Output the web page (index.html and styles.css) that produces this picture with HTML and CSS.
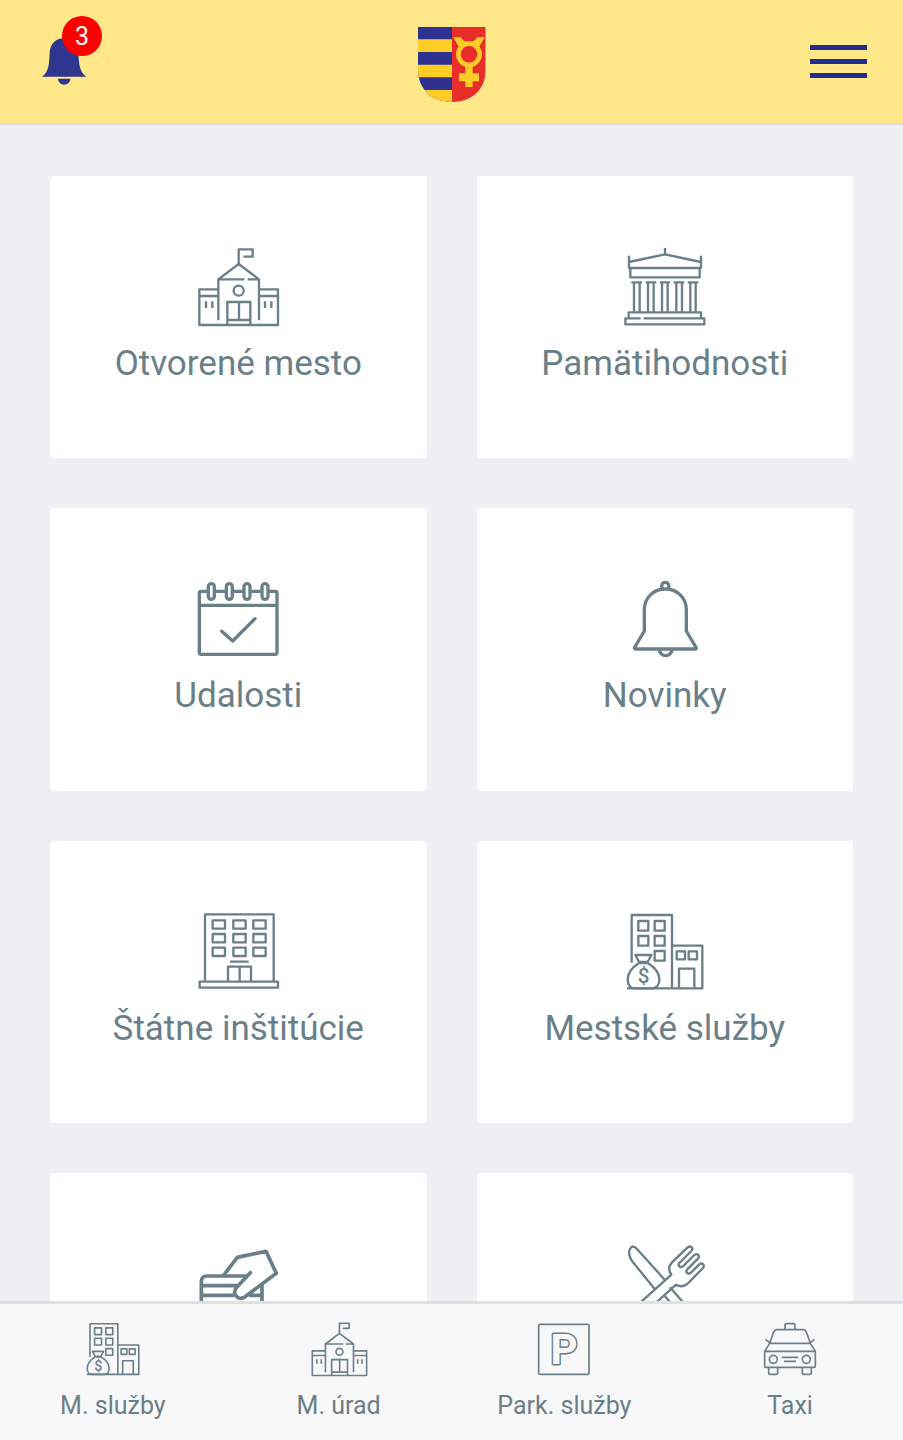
FILE: index.html
```html
<!DOCTYPE html>
<html lang="sk">
<head>
  <meta charset="UTF-8">
  <meta name="viewport" content="width=device-width, initial-scale=1">
  <title>Mesto</title>
  <link rel="stylesheet" href="styles.css">
</head>
<body>

  <!-- icons used both in the grid and in the bottom bar -->
  <svg class="sprite" aria-hidden="true">
    <symbol id="town-hall" viewBox="49 31 252 252">
      <path d="M177 85V41h42v22h-28M116 254V131l61-46 61 46v123M116 131h78M204 131h34M116 161H59v107h236V161h-57M59 181h57M238 181h57M79 197v20M98 197v20M256 197v20M275 197v20M143 268v-69h69v69M178 199v54M143 253h69"/>
      <circle cx="177" cy="165" r="15"/>
    </symbol>
    <symbol id="services" viewBox="54 31 252 252">
      <path d="M80 186V43h121v220M201 135h91v128H66M100 61h30v29h-30zM149 61h30v29h-30zM100 106h30v29h-30zM149 106h30v29h-30zM149 151h30v29h-30zM215 152h25v24h-25zM251 152h25v24h-25zM222 263v-59h46v59"/>
      <path d="M91 163h48l-11 21h-26zM102 187c-22 14-34 31-34 50 0 16 9 26 20 26h54c13 0 21-11 21-27 0-20-15-37-35-49z"/>
      <text class="icon-dollar" x="116" y="247">$</text>
    </symbol>
  </svg>

  <div class="app">
    <header class="header">
      <button class="bell" type="button" aria-label="Upozornenia">
        <svg width="45" height="50" viewBox="66 112 135 150">
          <path d="M66 234c22-15 21-42 23-72 1-26 18-43 43-43s42 17 43 43c2 30 2 57 24 72zM114 240h37a18 18 0 0 1-37 0z"/>
        </svg>
        <span class="badge">3</span>
      </button>

      <svg class="crest" width="68" height="82" viewBox="52 17 204 246">
        <clipPath id="shield">
          <path d="M52 37h203v128c0 63-43 98-101 98S52 228 52 165z"/>
        </clipPath>
        <g clip-path="url(#shield)">
          <path fill="#2e3192" d="M52 37h102v228H52z"/>
          <path fill="#ffcb25" d="M52 75h102v38H52zM52 151h102v38H52zM52 227h102v38H52z"/>
          <path fill="#e72e2b" d="M154 37h102v228H154z"/>
        </g>
        <circle cx="205" cy="120" r="32" fill="none" stroke="#ffcb25" stroke-width="14"/>
        <path fill="#ffcb25" d="M158 69h23c4 10 13 14 24 14s20-4 24-14h23l-19 33-28-11-28 11zM194 155h22v22h19v24h-19v17h-22v-17h-19v-24h19z"/>
      </svg>

      <button class="menu" type="button" aria-label="Menu">
        <span></span>
        <span></span>
        <span></span>
      </button>
    </header>

    <main class="content">
      <div class="grid">
        <a class="card" href="#">
          <svg class="icon"><use href="#town-hall"/></svg>
          <span>Otvorené mesto</span>
        </a>
        <a class="card" href="#">
          <svg class="icon" viewBox="55 33 252 252">
            <path d="M181 39v20M73 62v37h216V62M73 81l108-23 108 23M77 99v28h208V99M80 142h32M123 142h32M166 142h30M207 142h32M249 142h32"/>
            <path d="M88 142v89M105 142v89M130 142v89M147 142v89M172 142v89M189 142v89M215 142v89M232 142v89M257 142v89M273 142v89M72 249v-17h217v17M108 250H62v18h237v-18H117"/>
          </svg>
          <span>Pamätihodnosti</span>
        </a>
        <a class="card" href="#">
          <svg class="icon icon-bold" viewBox="49 23 252 252">
            <path d="M82 63H64q-5 0-5 5v178q0 6 5 6h223q5 0 5-6V68q0-5-5-5h-18M107 63h29M161 63h29M215 63h29M59 105h233M126 183l33 29 67-67"/>
            <rect x="86" y="40" width="18" height="47" rx="9"/>
            <rect x="140" y="40" width="18" height="47" rx="9"/>
            <rect x="193" y="40" width="18" height="47" rx="9"/>
            <rect x="247" y="40" width="18" height="47" rx="9"/>
          </svg>
          <span>Udalosti</span>
        </a>
        <a class="card" href="#">
          <svg class="icon icon-bold" viewBox="54 23 252 252">
            <path d="M92 236h179c3 0 4-2 2-5l-29-49v-64c0-36-28-62-63-62s-63 26-63 62v64l-29 49c-2 3 0 5 3 5zM162 238c3 12 10 18 20 18s17-6 20-18M172 56c-5-10 0-20 9-20s14 10 9 20"/>
          </svg>
          <span>Novinky</span>
        </a>
        <a class="card" href="#">
          <svg class="icon" viewBox="49 33 252 252">
            <path d="M76 244V43h206v201M60 245h235v18H60zM151 185h56M145 244v-44h69v44M180 200v44"/>
            <path d="M99 61h37v25H99zM161 61h37v25h-37zM221 61h37v25h-37zM99 102h37v25H99zM161 102h37v25h-37zM221 102h37v25h-37zM99 143h37v25H99zM161 143h37v25h-37zM221 143h37v25h-37z"/>
          </svg>
          <span>Štátne inštitúcie</span>
        </a>
        <a class="card" href="#">
          <svg class="icon"><use href="#services"/></svg>
          <span>Mestské služby</span>
        </a>
        <a class="card" href="#" aria-label="Platby">
          <svg class="icon icon-heavy" viewBox="49 24 252 252">
            <path d="M65 276V140q0-17 16-17h118M65 152h106M65 181h97M247 276V149M132 121l41-54 86-18 31 66-88 66c-10 9-22 12-31 4s-7-19 0-28l41-44M211 181h36"/>
          </svg>
        </a>
        <a class="card" href="#" aria-label="Reštaurácie">
          <svg class="icon" viewBox="55 24 252 252">
            <path d="M180 134L97 42c-8-9-15-10-20-2-7 10-3 27 5 38l68 84M196 157l80 92M177 179l70 82"/>
            <path d="M88 220L200 119c-10-15-8-27 2-37l47-45c10-7 18 3 11 11l-36 36c-6 8 4 17 12 9l33-33c10-7 18 3 11 11l-33 33c-6 8 4 16 12 9l25-25c9-7 17 2 11 11l-44 45c-11 11-25 12-37 5L130 225"/>
          </svg>
        </a>
      </div>
    </main>

    <nav class="tabs">
      <a class="tab" href="#">
        <svg class="tab-icon"><use href="#services"/></svg>
        <span>M. služby</span>
      </a>
      <a class="tab" href="#">
        <svg class="tab-icon"><use href="#town-hall"/></svg>
        <span>M. úrad</span>
      </a>
      <a class="tab" href="#">
        <svg class="tab-icon tab-icon-thin" viewBox="106 63 174 174">
          <rect x="117" y="73" width="151" height="150" rx="4"/>
          <text class="icon-parking" x="193" y="192">P</text>
        </svg>
        <span>Park. služby</span>
      </a>
      <a class="tab" href="#">
        <svg class="tab-icon tab-icon-thin" viewBox="783 63 174 174">
          <path d="M855 89V76q0-5 5-5h20q5 0 5 5v13M809 130l12-34q3-7 9-7h80q6 0 9 7l12 34zM809 130l-15 24v43q0 5 5 5h142q5 0 5-5v-43l-15-24M794 154h152M797 118l11 9M943 118l-11 9M845 172h50M852 184h36"/>
          <path d="M806 202v16q0 5 5 5h17q5 0 5-5v-16M907 202v16q0 5 5 5h17q5 0 5-5v-16"/>
          <circle cx="820" cy="178" r="12"/>
          <circle cx="919" cy="178" r="12"/>
        </svg>
        <span>Taxi</span>
      </a>
    </nav>
  </div>

</body>
</html>
```
FILE: styles.css
```css
* {
  box-sizing: border-box;
}

body {
  margin: 0;
  font-family: Roboto, Arial, sans-serif;
  color: #6b7f89;
  background: #efeff4;
}

a {
  color: inherit;
  text-decoration: none;
}

button {
  padding: 0;
  border: none;
  background: none;
  cursor: pointer;
}

svg {
  display: block;
}

.sprite {
  display: none;
}

.app {
  display: flex;
  flex-direction: column;
  height: 100vh;
}

/* Header */
.header {
  display: grid;
  grid-template-columns: 1fr auto 1fr;
  align-items: center;
  padding: 20px 36px 21px;
  background: #ffe78a;
  border-bottom: 2px solid #dcdce0;
}

.bell {
  position: relative;
  justify-self: start;
  padding-left: 6px;
  fill: #2e3690;
}

.badge {
  position: absolute;
  top: -20px;
  left: 26px;
  width: 40px;
  height: 40px;
  border-radius: 50%;
  background: #ff0000;
  color: #fff;
  font-family: Roboto, Arial, sans-serif;
  font-size: 25px;
  line-height: 42px;
  text-align: center;
}

.menu {
  display: flex;
  flex-direction: column;
  gap: 9px;
  justify-self: end;
  width: 57px;
}

.menu span {
  height: 5px;
  background: #232b8c;
}

/* Tiles */
.content {
  flex: 1;
  min-height: 0;
  overflow-y: auto;
  scrollbar-width: none;
}

.grid {
  display: grid;
  grid-template-columns: 1fr 1fr;
  gap: 50px;
  padding: 51px 50px;
}

.card {
  display: flex;
  flex-direction: column;
  align-items: center;
  gap: 13px;
  aspect-ratio: 4 / 3;
  padding-top: 70px;
  border-radius: 4px;
  background: #fff;
  font-size: 35px;
  line-height: 42px;
}

.icon,
.tab-icon {
  fill: none;
  stroke: #6b7f89;
  stroke-width: 7;
  stroke-linejoin: round;
}

.icon {
  width: 84px;
  height: 84px;
}

.icon-bold {
  stroke-width: 10;
  stroke-linecap: round;
}

.icon-heavy {
  stroke-width: 11;
  stroke-linecap: round;
}

.icon-dollar {
  fill: #6b7f89;
  stroke: none;
  font-size: 62px;
  font-weight: 500;
  text-anchor: middle;
}

/* Bottom bar */
.tabs {
  display: grid;
  grid-template-columns: repeat(4, 1fr);
  padding: 17px 0 19px;
  border-top: 3px solid #e0e0e0;
  background: #f8f8f8;
}

.tab {
  display: flex;
  flex-direction: column;
  align-items: center;
  gap: 12px;
  font-size: 25px;
  line-height: 30px;
}

.tab-icon {
  width: 58px;
  height: 58px;
}

.tab-icon-thin {
  stroke-width: 5;
}

/* fill painted over the stroke leaves only the outer contour */
.icon-parking {
  fill: #f8f8f8;
  stroke-width: 9;
  paint-order: stroke;
  font-size: 126px;
  font-weight: 700;
  text-anchor: middle;
}
```
